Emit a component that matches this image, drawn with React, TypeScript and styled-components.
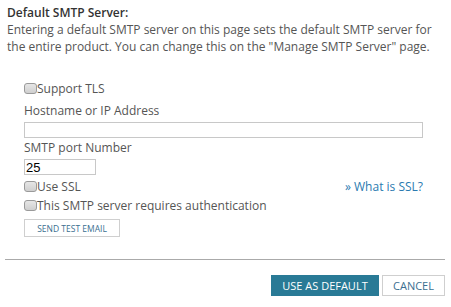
import styled, { createGlobalStyle } from "styled-components";

const GlobalStyle = createGlobalStyle`
  html, body {
    margin: 0;
    padding: 0;
    background: #fff;
  }
  body {
    font-family: "Open Sans", "Liberation Sans", sans-serif;
    color: #555;
  }
`;

const Page = styled.div`
  width: 451px;
  height: 307px;
  padding: 4px 6px 0 7px;
  box-sizing: border-box;
  display: flex;
  flex-direction: column;
`;

const Title = styled.div`
  font-weight: 650;
  font-size: 12px;
  line-height: 17px;
  color: #333;
`;

const Intro = styled.p`
  margin: 0;
  font-size: 12px;
  line-height: 17px;
  color: #555;
`;

const Form = styled.div`
  display: flex;
  flex-direction: column;
  padding: 25px 0 0 17px;
  width: 399px;
`;

const CheckRow = styled.label<{ $gap?: number }>`
  display: flex;
  align-items: center;
  justify-content: space-between;
  font-size: 12px;
  line-height: 17px;
  height: 17px;
  margin-bottom: ${(p) => p.$gap ?? 0}px;
`;

const CheckLabel = styled.span`
  display: flex;
  align-items: center;
`;

const Box = styled.input.attrs({ type: "checkbox" })`
  appearance: none;
  margin: 0;
  width: 13px;
  height: 11px;
  border: 1px solid #9a9a9a;
  border-radius: 3px;
  background: linear-gradient(#e6e6e6, #cfcfcf);
  box-sizing: border-box;
`;

const FieldLabel = styled.div<{ $top?: number }>`
  font-size: 12px;
  line-height: 17px;
  margin-top: ${(p) => p.$top ?? 0}px;
  margin-bottom: 3px;
`;

const TextInput = styled.input<{ $w: number }>`
  width: ${(p) => p.$w}px;
  height: 16px;
  box-sizing: border-box;
  border: 1px solid #c8c8c8;
  margin: 0;
  padding: 0 1px;
  font-family: "Liberation Sans", Arial, sans-serif;
  font-size: 13px;
  color: #000;
  outline: none;
`;

const Link = styled.a`
  color: #2a7ab0;
  text-decoration: none;
  font-size: 12px;
`;

const SmallButton = styled.button`
  align-self: flex-start;
  margin-top: 5px;
  width: 96px;
  height: 18px;
  border: 1px solid #cfcfcf;
  background: #fff;
  font-family: "Open Sans", "Liberation Sans", sans-serif;
  font-size: 8.5px;
  color: #3b6f90;
  text-transform: uppercase;
  padding: 0;
`;

const Divider = styled.hr`
  margin: 22px 0 0 -2px;
  border: 0;
  border-top: 1px solid #aaa;
  width: 440px;
`;

const Footer = styled.div`
  display: flex;
  justify-content: flex-end;
  gap: 3px;
  margin-top: 15px;
  width: 438px;
`;

const Action = styled.button<{ $primary?: boolean; $w: number }>`
  width: ${(p) => p.$w}px;
  height: 21px;
  padding: 0;
  font-family: "Open Sans", "Liberation Sans", sans-serif;
  font-size: 11px;
  text-transform: uppercase;
  border: 1px solid ${(p) => (p.$primary ? "#297a96" : "#cfcfcf")};
  background: ${(p) => (p.$primary ? "#297a96" : "#fff")};
  color: ${(p) => (p.$primary ? "#fff" : "#3b6f90")};
`;

export default function App() {
  return (
    <Page>
      <GlobalStyle />
      <Title>Default SMTP Server:</Title>
      <Intro>
        Entering a default SMTP server on this page sets the default SMTP server for the
        entire product. You can change this on the "Manage SMTP Server" page.
      </Intro>
      <Form>
        <CheckRow $gap={5}>
          <CheckLabel>
            <Box />
            Support TLS
          </CheckLabel>
        </CheckRow>
        <FieldLabel>Hostname or IP Address</FieldLabel>
        <TextInput $w={399} />
        <FieldLabel $top={1}>SMTP port Number</FieldLabel>
        <TextInput $w={72} defaultValue="25" />
        <CheckRow $gap={2} style={{ marginTop: 3 }}>
          <CheckLabel>
            <Box />
            Use SSL
          </CheckLabel>
          <Link href="#">» What is SSL?</Link>
        </CheckRow>
        <CheckRow>
          <CheckLabel>
            <Box />
            This SMTP server requires authentication
          </CheckLabel>
        </CheckRow>
        <SmallButton>Send Test Email</SmallButton>
      </Form>
      <Divider />
      <Footer>
        <Action $primary $w={108}>
          Use as default
        </Action>
        <Action $w={63}>Cancel</Action>
      </Footer>
    </Page>
  );
}
